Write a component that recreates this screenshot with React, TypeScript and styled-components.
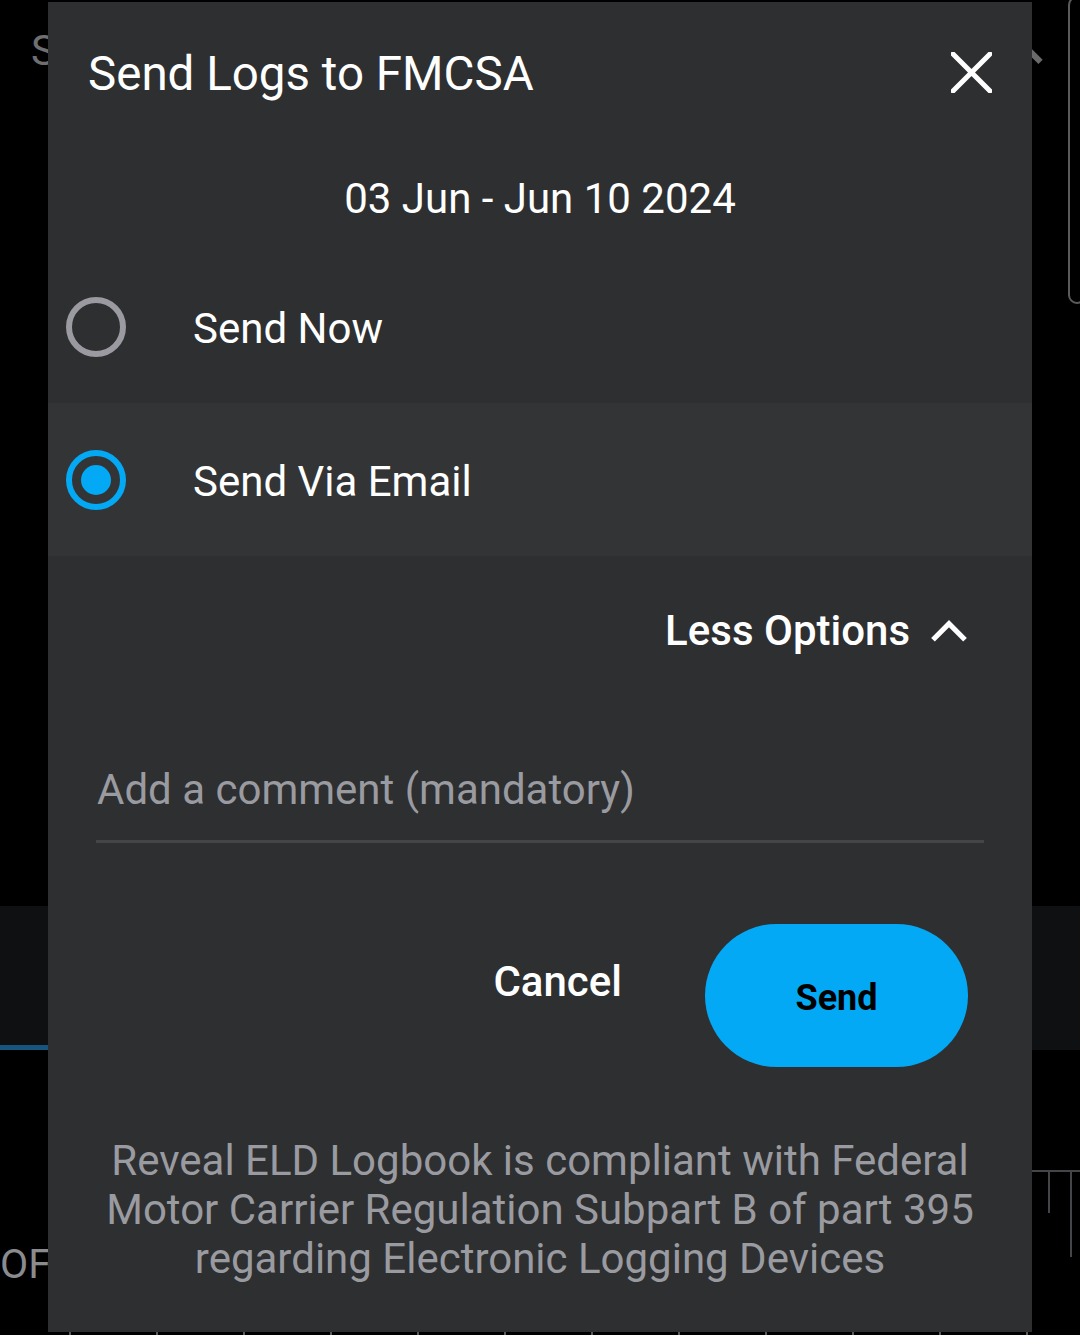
import React, { useState } from 'react';
import styled, { createGlobalStyle } from 'styled-components';

const GlobalStyle = createGlobalStyle`
  html, body {
    margin: 0;
    padding: 0;
    background: #000;
  }
  body {
    font-family: Roboto, "Noto Sans", "Liberation Sans", sans-serif;
    -webkit-font-smoothing: antialiased;
  }
  * {
    box-sizing: border-box;
  }
`;

/* ---------- page behind the dialog ---------- */

const Page = styled.div`
  position: relative;
  width: 1080px;
  height: 1335px;
  overflow: hidden;
  background: #000;
  display: flex;
  flex-direction: column;
`;

const AppBar = styled.div`
  height: 104px;
  flex: 0 0 auto;
  display: flex;
  align-items: center;
  justify-content: space-between;
  padding: 0 36px 0 31px;
`;

const BackTitle = styled.span`
  font-size: 42px;
  color: #6f6f72;
  line-height: 1;
  margin-top: -2px;
`;

const Scrollbar = styled.div`
  position: absolute;
  top: -4px;
  right: -6px;
  width: 18px;
  height: 308px;
  border: 2px solid #5b5b5e;
  border-radius: 12px;
`;

const Spacer = styled.div`
  flex: 0 0 802px;
`;

const TabBar = styled.div`
  flex: 0 0 144px;
  background: #0f1012;
  display: flex;
`;

const Tab = styled.div<{ $active?: boolean }>`
  width: 320px;
  height: 100%;
  border-bottom: 5px solid ${p => (p.$active ? '#17557e' : 'transparent')};
`;

const Chart = styled.div`
  position: relative;
  flex: 1;
  display: flex;
  flex-direction: column;
`;

const ChartLabel = styled.span`
  margin-top: 194px;
  font-size: 41px;
  color: #8a8b8e;
  line-height: 1;
`;

const GridH = styled.div`
  position: absolute;
  top: 120px;
  left: 1032px;
  right: 0;
  height: 2px;
  background: #444548;
`;

const GridV = styled.div<{ $x: number; $h: number }>`
  position: absolute;
  top: 120px;
  left: ${p => p.$x}px;
  width: 2px;
  height: ${p => p.$h}px;
  background: #444548;
`;

const TickRow = styled.div`
  margin-top: auto;
  height: 3px;
  display: flex;
  padding-left: 69px;
  gap: 85px;
`;

const Tick = styled.span`
  width: 2px;
  height: 3px;
  background: #5a5b5e;
`;

/* ---------- dialog ---------- */

const Dialog = styled.div`
  position: absolute;
  left: 48px;
  top: 2px;
  width: 984px;
  height: 1330px;
  background: #2e2f31;
  display: flex;
  flex-direction: column;
  color: #fff;
`;

const Header = styled.div`
  height: 146px;
  display: flex;
  align-items: center;
  justify-content: space-between;
  padding: 0 40px;
`;

const Title = styled.h2`
  margin: 0;
  font-size: 47.5px;
  font-weight: 400;
  line-height: 1;
`;

const CloseButton = styled.button`
  background: none;
  border: none;
  padding: 0;
  margin-top: -6px;
  width: 41px;
  height: 41px;
  display: flex;
  cursor: pointer;
`;

const DateRange = styled.div`
  height: 102px;
  display: flex;
  align-items: center;
  justify-content: center;
  font-size: 42px;
  line-height: 1;
`;

const OptionRow = styled.label<{ $selected: boolean }>`
  height: 153px;
  display: flex;
  align-items: center;
  padding-left: 18px;
  gap: 67px;
  background: ${p => (p.$selected ? '#333436' : 'transparent')};
  cursor: pointer;
`;

const Radio = styled.span<{ $checked: boolean }>`
  width: 60px;
  height: 60px;
  border-radius: 50%;
  border: 6px solid ${p => (p.$checked ? '#03a9f4' : '#9a9aa0')};
  display: flex;
  align-items: center;
  justify-content: center;

  &::after {
    content: '';
    width: 30px;
    height: 30px;
    border-radius: 50%;
    background: ${p => (p.$checked ? '#03a9f4' : 'transparent')};
  }
`;

const OptionText = styled.span`
  font-size: 42px;
  line-height: 1;
  margin-top: 4px;
`;

const MoreRow = styled.div`
  height: 146px;
  padding-top: 4px;
  display: flex;
  align-items: center;
  justify-content: flex-end;
  padding-right: 64px;
`;

const MoreButton = styled.button`
  background: none;
  border: none;
  padding: 0;
  display: flex;
  align-items: center;
  gap: 20px;
  color: #fff;
  font-family: inherit;
  font-size: 42px;
  font-weight: 500;
  line-height: 1;
  cursor: pointer;
`;

const CommentInput = styled.input`
  display: block;
  margin: 61px 48px 0;
  width: calc(100% - 96px);
  height: 80px;
  padding: 0 0 24px 1px;
  background: transparent;
  border: none;
  border-bottom: 3px solid #444548;
  color: #fff;
  font-family: inherit;
  font-size: 42px;
  line-height: 50px;
  outline: none;

  &::placeholder {
    color: #9a9ba0;
  }
`;

const Actions = styled.div`
  margin-top: 81px;
  display: flex;
  align-items: flex-start;
  justify-content: flex-end;
  padding-right: 64px;
  gap: 83px;
`;

const CancelButton = styled.button`
  height: 114px;
  background: none;
  border: none;
  padding: 0;
  color: #fff;
  font-family: inherit;
  font-size: 42px;
  font-weight: 500;
  cursor: pointer;
`;

const SendButton = styled.button`
  width: 263px;
  height: 143px;
  border-radius: 72px;
  border: none;
  background: #03a9f4;
  color: #000;
  font-family: inherit;
  font-size: 36px;
  font-weight: 700;
  padding: 4px 0 0;
  cursor: pointer;
`;

const Notice = styled.p`
  margin: 69px 0 0;
  text-align: center;
  font-size: 42px;
  line-height: 49px;
  color: #9a9ba0;
`;

const CloseIcon = () => (
  <svg width="41" height="41" viewBox="0 0 41 41">
    <path d="M2 2 L39 39 M39 2 L2 39" stroke="#fff" strokeWidth="5" strokeLinecap="square" fill="none" />
  </svg>
);

const ChevronUp = ({ color, size }: { color: string; size: number }) => (
  <svg width={size} height={size * 0.62} viewBox="0 0 40 25">
    <path d="M3 22 L20 5 L37 22" stroke={color} strokeWidth="5.5" fill="none" />
  </svg>
);

const options = ['Send Now', 'Send Via Email'];

const App: React.FC = () => {
  const [choice, setChoice] = useState(1);
  const [comment, setComment] = useState('');

  return (
    <>
      <GlobalStyle />
      <Page>
        <AppBar>
          <BackTitle>S</BackTitle>
          <ChevronUp color="#6a6a6d" size={44} />
        </AppBar>
        <Scrollbar />
        <Spacer />
        <TabBar>
          <Tab $active />
          <Tab />
        </TabBar>
        <Chart>
          <ChartLabel>OF</ChartLabel>
          <GridH />
          <GridV $x={1048} $h={43} />
          <GridV $x={1070} $h={87} />
          <TickRow>
            {Array.from({ length: 12 }).map((_, i) => (
              <Tick key={i} />
            ))}
          </TickRow>
        </Chart>

        <Dialog>
          <Header>
            <Title>Send Logs to FMCSA</Title>
            <CloseButton aria-label="Close">
              <CloseIcon />
            </CloseButton>
          </Header>
          <DateRange>03 Jun - Jun 10 2024</DateRange>
          {options.map((label, i) => (
            <OptionRow key={label} $selected={choice === i} onClick={() => setChoice(i)}>
              <Radio $checked={choice === i} />
              <OptionText>{label}</OptionText>
            </OptionRow>
          ))}
          <MoreRow>
            <MoreButton>
              Less Options
              <ChevronUp color="#fff" size={38} />
            </MoreButton>
          </MoreRow>
          <CommentInput
            placeholder="Add a comment (mandatory)"
            value={comment}
            onChange={e => setComment(e.target.value)}
          />
          <Actions>
            <CancelButton>Cancel</CancelButton>
            <SendButton>Send</SendButton>
          </Actions>
          <Notice>
            Reveal ELD Logbook is compliant with Federal
            <br />
            Motor Carrier Regulation Subpart B of part 395
            <br />
            regarding Electronic Logging Devices
          </Notice>
        </Dialog>
      </Page>
    </>
  );
};

export default App;
